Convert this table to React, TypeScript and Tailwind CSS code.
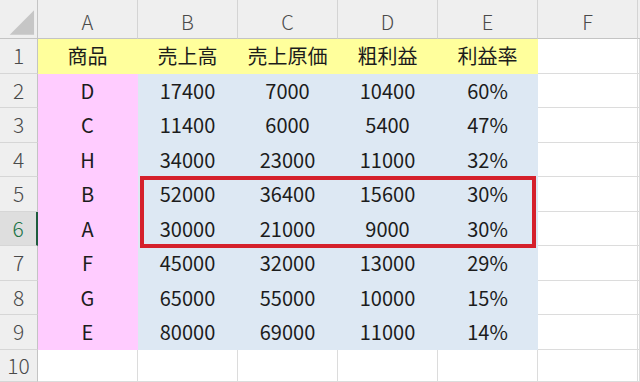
const cols = ['A', 'B', 'C', 'D', 'E', 'F'];

const header = ['商品', '売上高', '売上原価', '粗利益', '利益率'];

const rows: string[][] = [
  ['D', '17400', '7000', '10400', '60%'],
  ['C', '11400', '6000', '5400', '47%'],
  ['H', '34000', '23000', '11000', '32%'],
  ['B', '52000', '36400', '15600', '30%'],
  ['A', '30000', '21000', '9000', '30%'],
  ['F', '45000', '32000', '13000', '29%'],
  ['G', '65000', '55000', '10000', '15%'],
  ['E', '80000', '69000', '11000', '14%'],
];

function RowHead({ n, selected }: { n: number; selected?: boolean }) {
  return (
    <div
      className={`flex items-center justify-center border-b border-[#d6d6d6] text-[21px] font-light ${
        selected
          ? 'bg-[#dedede] text-[#217346] border-r-2 border-r-[#1f5c3d]'
          : 'bg-[#efefef] text-[#4a4a4a] border-r border-r-[#c4c4c4]'
      }`}
    >
      {n}
    </div>
  );
}

function Cell({ text, tone }: { text?: string; tone: 'yellow' | 'pink' | 'blue' | 'white' }) {
  const toneClass = {
    yellow: 'bg-[#ffff9c] border-[#ffff9c]',
    pink: 'bg-[#ffccff] border-[#ffccff]',
    blue: 'bg-[#dde8f3] border-[#dde8f3]',
    white: 'bg-white border-[#dcdcdc]',
  }[tone];
  return (
    <div className={`flex items-center justify-center border-r border-b pt-px text-[20px] text-[#1c1c1c] ${toneClass}`}>
      {text}
    </div>
  );
}

export default function App() {
  return (
    <div
      className="relative h-[382px] w-[640px] overflow-hidden bg-white"
      style={{ fontFamily: '"Noto Sans CJK JP", "Noto Sans", sans-serif' }}
    >
      <div className="grid h-full grid-cols-[38px_repeat(6,100px)_1fr] grid-rows-[39px_repeat(9,34.5px)_1fr]">
        {/* corner */}
        <div className="flex items-end justify-end border-r border-b border-[#c4c4c4] bg-[#efefef] pt-[5px]">
          <svg width="38" height="34" viewBox="0 0 38 34" className="block">
            <polygon points="35,6 35,31 10,31" fill="#c6c6c6" />
          </svg>
        </div>
        {cols.map((c) => (
          <div
            key={c}
            className="flex items-center justify-center border-r border-r-[#d4d4d4] border-b border-b-[#c4c4c4] bg-[#efefef] pt-[5px] text-[20px] font-light text-[#4a4a4a]"
          >
            {c}
          </div>
        ))}
        <div className="border-b border-[#c4c4c4] bg-[#efefef]" />

        {/* row 1 */}
        <RowHead n={1} />
        {header.map((h) => (
          <Cell key={h} text={h} tone="yellow" />
        ))}
        <Cell tone="white" />
        <Cell tone="white" />

        {rows.map((r, i) => (
          <div key={i} className="contents">
            <RowHead n={i + 2} selected={i + 2 === 6} />
            <Cell text={r[0]} tone="pink" />
            {r.slice(1).map((v, j) => (
              <Cell key={j} text={v} tone="blue" />
            ))}
            <Cell tone="white" />
            <Cell tone="white" />
          </div>
        ))}

        {/* row 10 */}
        <RowHead n={10} />
        {cols.map((c) => (
          <Cell key={c} tone="white" />
        ))}
        <Cell tone="white" />
      </div>

      {/* highlight box */}
      <div className="pointer-events-none absolute left-[140px] top-[176px] h-[72px] w-[396px] border-4 border-[#d5202b]" />
    </div>
  );
}
